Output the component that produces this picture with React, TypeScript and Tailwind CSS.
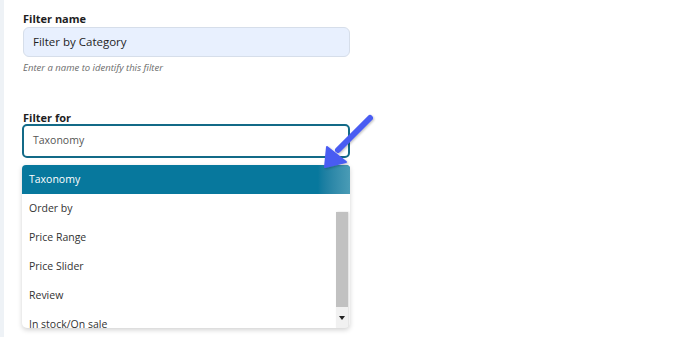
const options = ['Order by', 'Price Range', 'Price Slider', 'Review', 'In stock/On sale'];

export default function App() {
  return (
    <div className="relative flex h-[337px] w-[676px] overflow-hidden bg-white font-['Open_Sans','Noto_Sans',sans-serif]">
      <div className="w-[4px] shrink-0 bg-[#eef2f6]" />

      <div className="flex flex-col pl-[19px] pt-[11px]">
        <label className="text-[11px] leading-[16px] font-bold text-[#1e1e1e]">Filter name</label>
        <div className="mt-[0px] flex h-[30px] w-[327px] items-center rounded-[6px] border border-[#d6deea] bg-[#e8f0fe] px-[9px] text-[11.5px] text-[#1e1e1e]">
          Filter by Category
        </div>
        <p className="mt-[4px] text-[9.5px] leading-[14px] italic text-[#6b6b6b]">Enter a name to identify this filter</p>

        <label className="mt-[35px] text-[11px] leading-[16px] font-bold text-[#1e1e1e]">Filter for</label>
        <div className="-ml-[1px] mt-[-2px] flex h-[34px] w-[328px] items-center rounded-[5px] border-2 border-[#136a87] bg-white px-[9px] text-[10.5px] text-[#555]">
          Taxonomy
        </div>

        <div className="-ml-[1px] mt-[7px] w-[328px] overflow-hidden rounded-b-[5px] rounded-t-[4px] bg-white shadow-[0_2px_5px_rgba(0,0,0,0.18)]">
          <div className="relative flex h-[29px] items-center bg-[#07789d] px-[7px] text-[10.5px] text-white">
            Taxonomy
            <div className="absolute inset-y-0 right-0 w-[32px] bg-gradient-to-r from-[#07789d] to-[#4a9cb6]" />
          </div>
          <div className="relative h-[134px] overflow-hidden">
            {options.map((o) => (
              <div key={o} className="flex h-[29px] items-center px-[7px] text-[10.5px] text-[#333]">
                {o}
              </div>
            ))}
            <div className="absolute right-[2px] top-[18px] bottom-0 flex w-[12px] flex-col bg-[#f1f1f1] shadow-[1px_0_2px_rgba(0,0,0,0.15)]">
              <div className="h-[95px] bg-[#c1c1c1]" />
              <div className="flex flex-1 items-center justify-center">
                <div className="h-0 w-0 border-x-[3px] border-t-[4px] border-x-transparent border-t-[#222]" />
              </div>
            </div>
          </div>
        </div>
      </div>

      <svg className="absolute left-[318px] top-[110px]" width="64" height="64" viewBox="0 0 64 64">
        <defs>
          <filter id="sh" x="-20%" y="-20%" width="140%" height="140%">
            <feDropShadow dx="1" dy="1" stdDeviation="1" floodColor="#000" floodOpacity="0.25" />
          </filter>
        </defs>
        <g filter="url(#sh)" fill="#4a5cf2" stroke="#4a5cf2" strokeLinecap="round" strokeLinejoin="round">
          <line x1="52" y1="8" x2="20" y2="40" strokeWidth="6" />
          <polygon points="7,57 9,37 28,52" strokeWidth="2" />
        </g>
      </svg>
    </div>
  );
}
